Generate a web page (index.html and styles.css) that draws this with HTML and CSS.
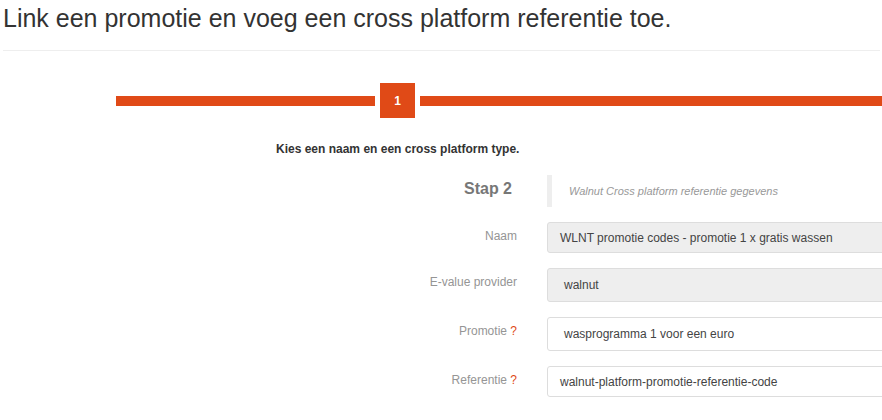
FILE: index.html
```html
<!DOCTYPE html>
<html lang="nl">
<head>
<meta charset="utf-8">
<title>Cross platform referentie</title>
<link rel="stylesheet" href="styles.css">
</head>
<body>
<div class="page">
  <h1 class="title">Link een promotie en voeg een cross platform referentie toe.</h1>
  <hr class="divider">
  <div class="stepper">
    <span class="bar bar-left"></span>
    <span class="step">1</span>
    <span class="bar bar-right"></span>
  </div>
  <p class="intro">Kies een naam en een cross platform type.</p>
  <div class="form">
    <div class="label stap">Stap 2</div>
    <div class="note">Walnut Cross platform referentie gegevens</div>

    <div class="label">Naam</div>
    <div class="control input disabled">WLNT promotie codes - promotie 1 x gratis wassen</div>

    <div class="label">E-value provider</div>
    <div class="control select disabled">walnut</div>

    <div class="label">Promotie <span class="help">?</span></div>
    <div class="control select">wasprogramma 1 voor een euro</div>

    <div class="label">Referentie <span class="help">?</span></div>
    <div class="control input">walnut-platform-promotie-referentie-code</div>
  </div>
</div>
</body>
</html>
```

FILE: styles.css
```css
html, body {
  margin: 0;
  padding: 0;
  background: #fff;
}

body {
  font-family: "Liberation Sans", Arial, sans-serif;
  color: #333;
  overflow: hidden;
  width: 882px;
  height: 420px;
}

.page {
  width: 882px;
  overflow: hidden;
}

.title {
  margin: 0;
  padding: 3px 0 0 3px;
  font-size: 25px;
  line-height: 30px;
  font-weight: normal;
  color: #333;
}

.divider {
  margin: 17px 2px 0 3px;
  border: 0;
  border-top: 1px solid #eee;
  height: 0;
}

.stepper {
  display: flex;
  align-items: center;
  gap: 5px;
  margin-top: 32px;
  padding-left: 116px;
  height: 35px;
}

.bar {
  display: block;
  height: 10px;
  background: #e04a17;
  flex: none;
}

.bar-left {
  width: 259px;
}

.bar-right {
  width: 520px;
}

.step {
  flex: none;
  width: 35px;
  height: 35px;
  background: #e04a17;
  color: #fff;
  font-weight: bold;
  font-size: 12px;
  display: flex;
  align-items: center;
  justify-content: center;
}

.intro {
  margin: 23px 0 0;
  padding-left: 276px;
  font-size: 12px;
  line-height: 17px;
  font-weight: bold;
  color: #333;
}

.form {
  display: grid;
  grid-template-columns: 517px 420px;
  column-gap: 30px;
  row-gap: 15px;
  margin-top: 17px;
}

.label {
  text-align: right;
  font-size: 12px;
  line-height: 17px;
  color: #959595;
  padding-top: 6px;
  align-self: start;
}

.label.stap {
  font-size: 16px;
  font-weight: bold;
  color: #777;
  padding: 0 5px 0 0;
  align-self: center;
  line-height: 20px;
  margin-top: -4px;
}

.help {
  color: #e04a17;
}

.note {
  height: 32px;
  border-left: 5px solid #eee;
  padding-left: 17px;
  display: flex;
  align-items: center;
  font-size: 11px;
  font-style: italic;
  color: #999;
}

.control {
  box-sizing: border-box;
  border: 1px solid #ddd;
  border-radius: 3px;
  background: #fff;
  font-size: 12px;
  color: #444;
  display: flex;
  align-items: center;
}

.control.input {
  height: 31px;
  padding-left: 12px;
}

.control.select {
  height: 34px;
  padding-left: 16px;
}

.control.disabled {
  background: #eee;
}
```
